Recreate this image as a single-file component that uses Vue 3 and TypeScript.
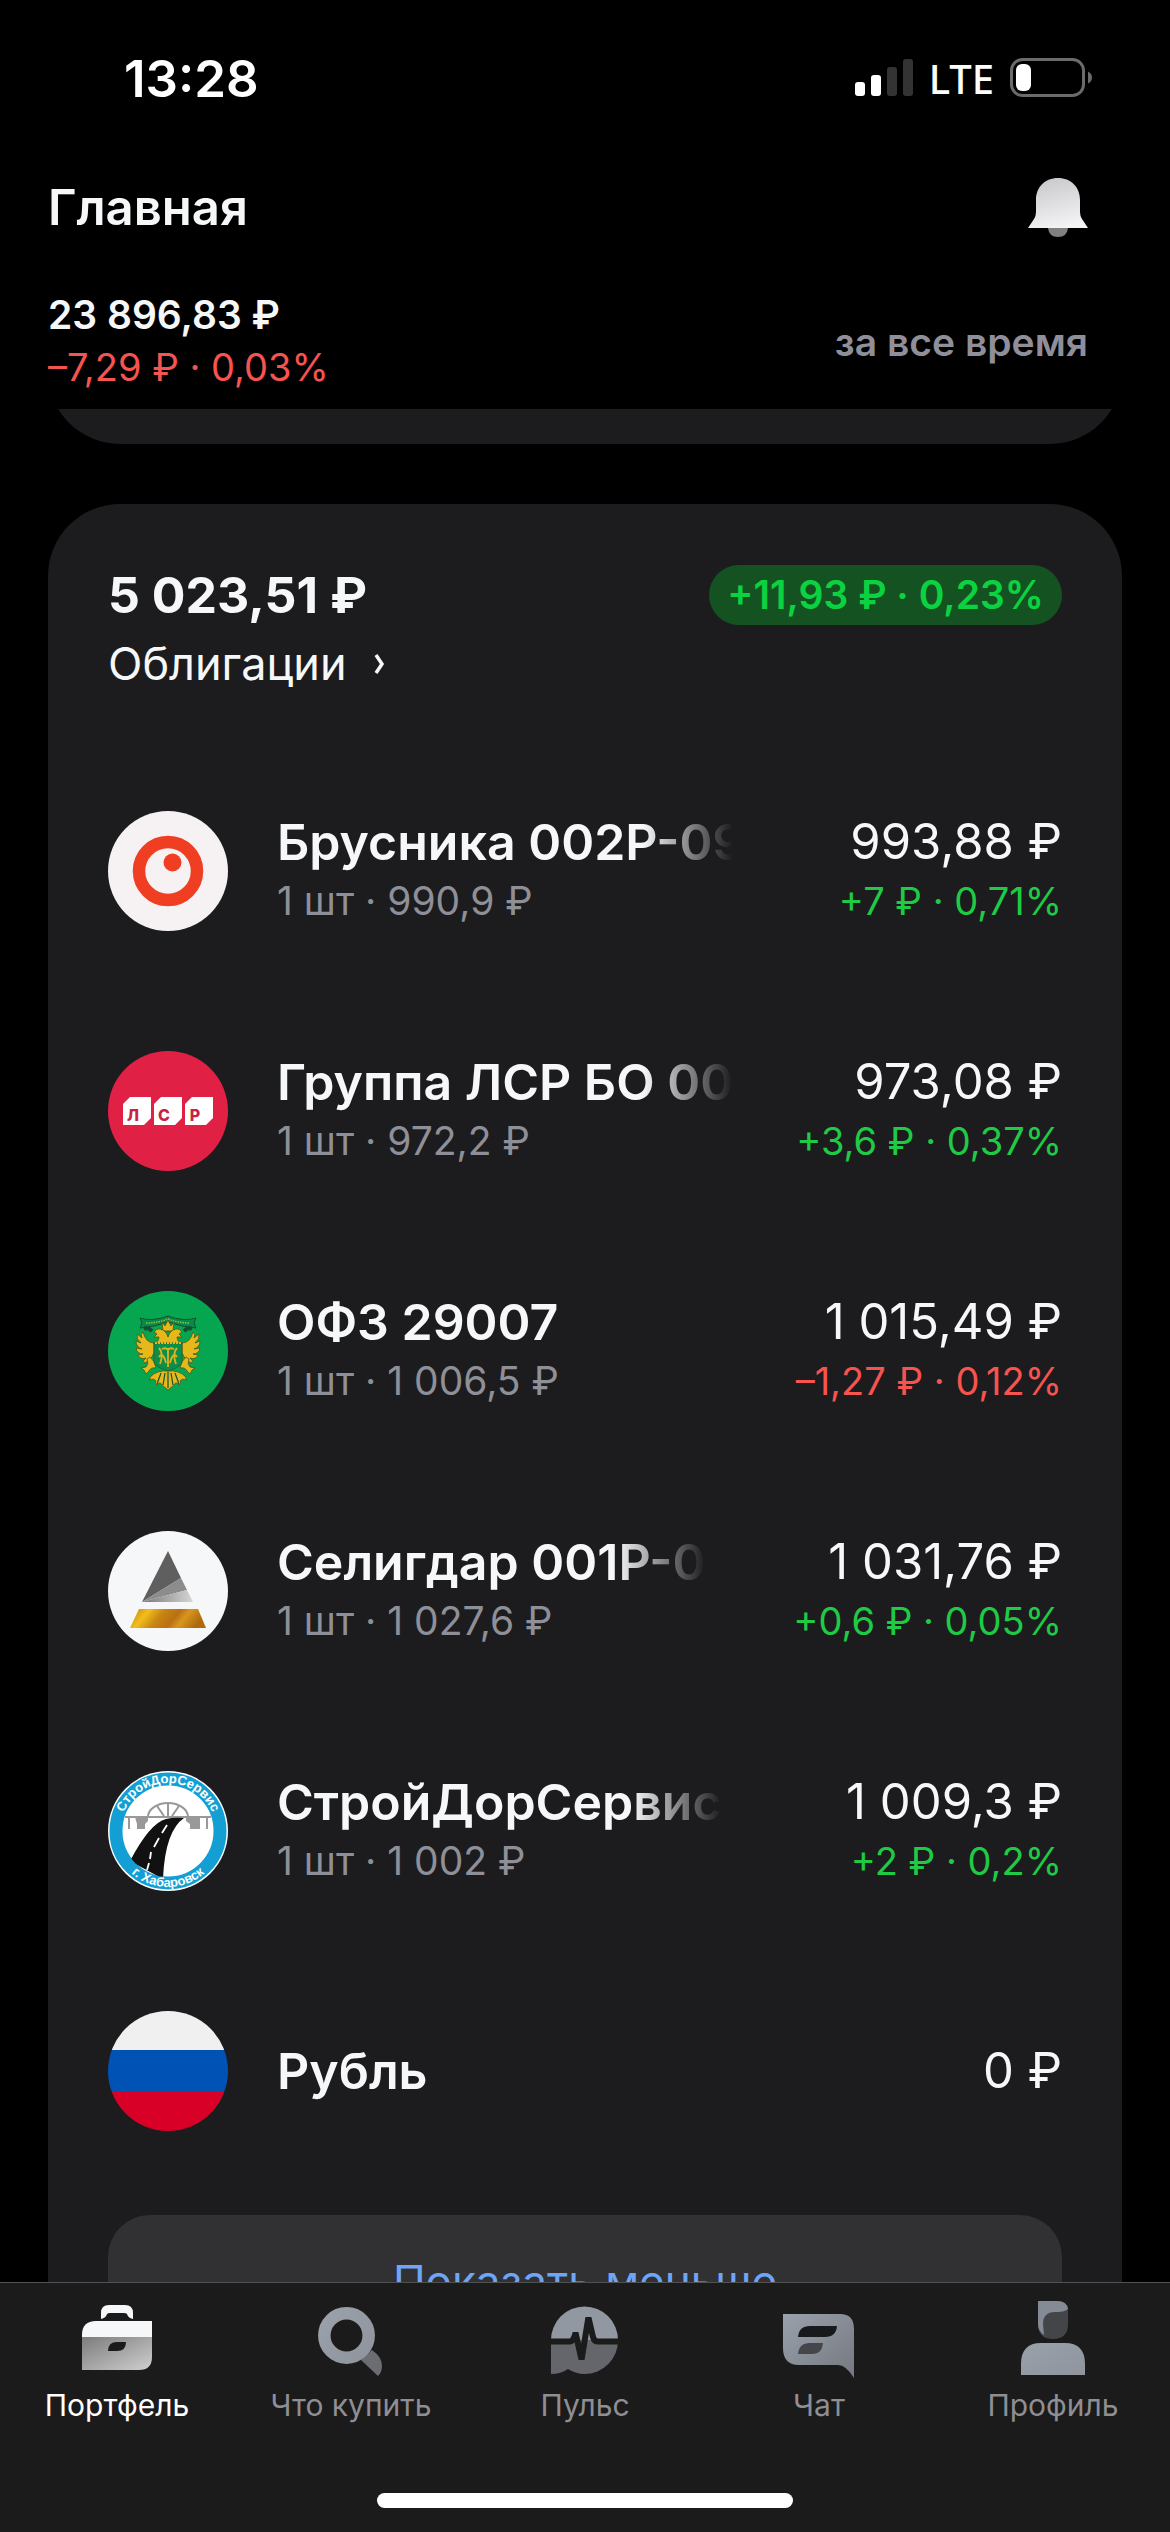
<script setup lang="ts">
type LogoName = 'brusnika' | 'lsr' | 'ofz' | 'seligdar' | 'sds' | 'rub'
type TabName = 'portfolio' | 'search' | 'pulse' | 'chat' | 'profile'

interface Holding {
  logo: LogoName
  name: string
  faded?: boolean
  details?: string
  value: string
  change?: string
  loss?: boolean
}

const holdings: Holding[] = [
  { logo: 'brusnika', name: 'Брусника 002Р-09', faded: true, details: '1 шт · 990,9 ₽', value: '993,88 ₽', change: '+7 ₽ · 0,71%' },
  { logo: 'lsr', name: 'Группа ЛСР БО 001', faded: true, details: '1 шт · 972,2 ₽', value: '973,08 ₽', change: '+3,6 ₽ · 0,37%' },
  { logo: 'ofz', name: 'ОФЗ 29007', details: '1 шт · 1 006,5 ₽', value: '1 015,49 ₽', change: '–1,27 ₽ · 0,12%', loss: true },
  { logo: 'seligdar', name: 'Селигдар 001Р-0', faded: true, details: '1 шт · 1 027,6 ₽', value: '1 031,76 ₽', change: '+0,6 ₽ · 0,05%' },
  { logo: 'sds', name: 'СтройДорСервис', faded: true, details: '1 шт · 1 002 ₽', value: '1 009,3 ₽', change: '+2 ₽ · 0,2%' },
  { logo: 'rub', name: 'Рубль', value: '0 ₽' },
]

const tabs: { id: TabName; label: string }[] = [
  { id: 'portfolio', label: 'Портфель' },
  { id: 'search', label: 'Что купить' },
  { id: 'pulse', label: 'Пульс' },
  { id: 'chat', label: 'Чат' },
  { id: 'profile', label: 'Профиль' },
]
const activeTab: TabName = 'portfolio'
</script>

<template>
  <div class="screen">
    <div class="status">
      <span class="time">13:28</span>
      <div class="indicators">
        <svg class="signal" viewBox="0 0 58 38" aria-hidden="true">
          <rect x="0" y="23" width="10" height="14" rx="3" fill="#fff" />
          <rect x="16" y="16" width="10" height="21" rx="3" fill="#fff" />
          <rect x="32" y="8" width="10" height="29" rx="3" fill="#333" />
          <rect x="48" y="0" width="10" height="37" rx="3" fill="#333" />
        </svg>
        <span class="network">LTE</span>
        <svg class="battery" viewBox="0 0 82 40" aria-hidden="true">
          <rect x="1.5" y="1.5" width="72" height="36" rx="11" fill="none" stroke="#6b6b6b" stroke-width="3" />
          <rect x="6" y="6" width="15" height="27" rx="6" fill="#fff" />
          <path d="M78 13.500Q82 15.500 82 19.500Q82 23.500 78 25.500Z" fill="#6b6b6b" />
        </svg>
      </div>
    </div>

    <header class="top">
      <div class="title-row">
        <h1>Главная</h1>
        <button class="bell" type="button" aria-label="Уведомления">
          <svg viewBox="0 0 60 60" aria-hidden="true">
            <defs>
              <linearGradient id="bellFill" x1="0.3" y1="0" x2="0.6" y2="1">
                <stop offset="0" stop-color="#c9c9cb" />
                <stop offset="1" stop-color="#f4f4f6" />
              </linearGradient>
            </defs>
            <path d="M20 50H40V50Q39 59 30 59Q21 59 20 50Z" fill="#808080" />
            <path d="M8 22C8 9 17 0 30 0S52 9 52 22V34Q52 38 54 41L60 50H0L6 41Q8 38 8 34Z" fill="url(#bellFill)" />
          </svg>
        </button>
      </div>
      <div class="summary">
        <div>
          <p class="total">23 896,83 ₽</p>
          <p class="total-change">–7,29 ₽ · 0,03%</p>
        </div>
        <button class="period" type="button">за все время</button>
      </div>
    </header>

    <main class="content">
      <section class="card card-above"></section>
      <section class="card">
        <div class="card-head">
          <h2>5 023,51 ₽</h2>
          <span class="badge">+11,93 ₽ · 0,23%</span>
        </div>
        <a class="category" href="#bonds">
          <span>Облигации</span>
          <svg viewBox="0 0 14 20" aria-hidden="true">
            <path d="M3 1L9 10L3 19" fill="none" stroke="#f6f7f8" stroke-width="3.500" />
          </svg>
        </a>

        <ul class="holdings">
          <li v-for="item in holdings" :key="item.logo" class="holding">
            <svg class="logo" viewBox="0 0 120 120" aria-hidden="true">
              <template v-if="item.logo === 'brusnika'">
                <circle cx="60" cy="60" r="60" fill="#f6f1f3" />
                <circle cx="60" cy="60" r="29" fill="none" stroke="#f03e23" stroke-width="12.500" />
                <circle cx="64.500" cy="51.500" r="9" fill="#f03e23" />
              </template>
              <template v-else-if="item.logo === 'lsr'">
                <circle cx="60" cy="60" r="60" fill="#e02045" />
                <g fill="#fff">
                  <path d="M22 46H43V67L36 74H15V53Z" />
                  <path d="M53 46H74V67L67 74H46V53Z" />
                  <path d="M84 46H105V67L98 74H77V53Z" />
                </g>
                <g class="lsr-letters">
                  <text x="25" y="70">Л</text>
                  <text x="56" y="70">С</text>
                  <text x="87" y="70">Р</text>
                </g>
              </template>
              <template v-else-if="item.logo === 'ofz'">
                <circle cx="60" cy="60" r="60" fill="#06a651" />
                <path d="M32 27Q44 31 60 25Q76 31 88 27L86 32L88 37Q74 36 60 31Q46 36 32 37L34 32Z" fill="#0a8a4a" stroke="#14502f" stroke-width="1" />
                <path d="M38 32Q50 32 60 28Q70 32 82 32" fill="none" stroke="#8fbf3f" stroke-width="1.500" stroke-dasharray="1.500 1" />
                <path d="M36 38Q40 36 44 40M84 38Q80 36 76 40" stroke="#14502f" stroke-width="4" fill="none" />
                <g fill="#e5b81c" stroke="#4c5518" stroke-width="0.800">
                  <path d="M54 31L57 35L60 29L63 35L66 31L65 40H55Z" />
                  <path d="M60 46Q58 39 52 38Q49 37 46 41L49 43L46 46L51 46Q51 51 46 52H74Q69 51 69 46L74 46L71 43L74 41Q71 37 68 38Q62 39 60 46Z" />
                  <path d="M46 52Q38 52 35 41Q32 43 34 47L29 43Q28 48 33 52L28 50Q28 56 34 58L28 57Q29 63 35 63L30 64Q32 69 38 67Q34 70 36 72Q42 71 46 62Z" />
                  <path d="M74 52Q82 52 85 41Q88 43 86 47L91 43Q92 48 87 52L92 50Q92 56 86 58L92 57Q91 63 85 63L90 64Q88 69 82 67Q86 70 84 72Q78 71 74 62Z" />
                  <path d="M42 66Q47 70 48 77Q43 76 41 80L38 83L36 79L33 77L38 76Q41 73 39 68Z" />
                  <path d="M78 66Q73 70 72 77Q77 76 79 80L82 83L84 79L87 77L82 76Q79 73 81 68Z" />
                  <path d="M60 80Q50 79 43 85L41 89Q46 87 48 90Q46 92 49 94Q52 90 54 94L60 99L66 94Q68 90 71 94Q74 92 72 90Q74 87 79 89L77 85Q70 79 60 80Z" />
                </g>
                <path d="M53 82L49 93M57 82L55 94M60 81V97M63 82L65 94M67 82L71 93" stroke="#14502f" stroke-width="1.200" />
                <path d="M46 52H74V71Q73 76 60 80Q47 76 46 71Z" fill="#0b8f4a" stroke="#275b28" stroke-width="0.800" />
                <path d="M47 52H73" stroke="#e5b81c" stroke-width="2" stroke-dasharray="2 1" />
                <path d="M51 57Q56 62 52 73M69 57Q64 62 68 73M60 57V76M54 58Q58 56 60 59Q62 56 66 58M51 66Q55 60 58 72M69 66Q65 60 62 72" fill="none" stroke="#dcb31f" stroke-width="1.800" />
              </template>
              <template v-else-if="item.logo === 'seligdar'">
                <defs>
                  <linearGradient id="goldBar" x1="0" x2="1" y1="0" y2="0.2">
                    <stop offset="0" stop-color="#b8830f" />
                    <stop offset="0.250" stop-color="#f2be1c" />
                    <stop offset="0.450" stop-color="#c98513" />
                    <stop offset="0.650" stop-color="#b97013" />
                    <stop offset="0.780" stop-color="#d9961e" />
                    <stop offset="1" stop-color="#b0690d" />
                  </linearGradient>
                  <linearGradient id="silverFace" x1="0" x2="1">
                    <stop offset="0" stop-color="#777" />
                    <stop offset="1" stop-color="#d6d6d6" />
                  </linearGradient>
                </defs>
                <circle cx="60" cy="60" r="60" fill="#f6f7f9" />
                <path d="M60 20L73 47L34 71Z" fill="#5f5f5f" />
                <path d="M73 47L79 59L34 71Z" fill="#8c8c8c" />
                <path d="M79 59L85 71H34Z" fill="url(#silverFace)" />
                <path d="M31 78H90L98 97H22Z" fill="url(#goldBar)" />
              </template>
              <template v-else-if="item.logo === 'sds'">
                <defs>
                  <path id="ringTop" d="M12 60A48 48 0 0 1 108 60" />
                  <path id="ringBottom" d="M4 60A56 56 0 0 0 116 60" />
                  <clipPath id="innerDisc"><circle cx="60" cy="60" r="46" /></clipPath>
                </defs>
                <circle cx="60" cy="60" r="60" fill="#fff" />
                <circle cx="60" cy="60" r="52" fill="none" stroke="#139fd3" stroke-width="13" />
                <g fill="none" stroke="#999" stroke-width="2">
                  <path d="M17 46H103" />
                  <path d="M40 46A20 14 0 0 1 80 46" />
                  <path d="M60 32V46M49 35L56 45M71 35L64 45M21 46V58M99 46V58" />
                </g>
                <path d="M27 46H40V50L37 53V58H29V53ZM78 46H92V58H82V53L78 50Z" fill="#999" />
                <path d="M76 47Q57 60 55 108L22 90Q42 52 58 48Q66 46 76 47Z" fill="#111" clip-path="url(#innerDisc)" />
                <path d="M59 54L54 62M51 67L46 76M43 81L42 88M41 92L39 99" stroke="#fff" stroke-width="1.800" />
                <g class="ring-letters">
                  <text text-anchor="middle"><textPath href="#ringTop" startOffset="50%">СтройДорСервис</textPath></text>
                  <text text-anchor="middle"><textPath href="#ringBottom" startOffset="50%">г. Хабаровск</textPath></text>
                </g>
              </template>
              <template v-else>
                <defs>
                  <clipPath id="flagDisc"><circle cx="60" cy="60" r="60" /></clipPath>
                </defs>
                <g clip-path="url(#flagDisc)">
                  <rect width="120" height="39" fill="#f0f0f0" />
                  <rect y="39" width="120" height="42" fill="#0052b4" />
                  <rect y="81" width="120" height="39" fill="#d80027" />
                </g>
              </template>
            </svg>
            <div class="info">
              <p class="name" :class="{ faded: item.faded }">{{ item.name }}</p>
              <p v-if="item.details" class="details">{{ item.details }}</p>
            </div>
            <div class="amounts">
              <p class="value">{{ item.value }}</p>
              <p v-if="item.change" class="change" :class="{ loss: item.loss }">{{ item.change }}</p>
            </div>
          </li>
        </ul>

        <button class="less" type="button">Показать меньше</button>
      </section>
    </main>

    <div class="bottom">
      <nav class="tabs">
        <a v-for="tab in tabs" :key="tab.id" class="tab" :class="{ active: tab.id === activeTab }" :href="'#' + tab.id">
          <svg viewBox="0 0 80 80" aria-hidden="true">
            <defs>
              <linearGradient :id="tab.id + 'Fill'" x1="0" y1="0" x2="1" y2="1">
                <stop offset="0" :stop-color="tab.id === 'portfolio' ? '#7c7c7d' : '#9aa1ab'" />
                <stop offset="1" :stop-color="tab.id === 'portfolio' ? '#cfcfd0' : tab.id === 'chat' ? '#74787f' : '#8f949d'" />
              </linearGradient>
            </defs>
            <template v-if="tab.id === 'portfolio'">
              <path d="M24 20V14Q24 6 32 6H48Q56 6 56 14V20Q51 19 50 15Q49 14 47 14H33Q31 14 30 15Q29 19 24 20Z" fill="#f6f7f8" />
              <path d="M5 38V36Q5 22 19 22H75V38Z" fill="#f6f7f8" />
              <path d="M5 38H75V58Q75 71 62 71H5Z" fill="url(#portfolioFill)" />
              <path d="M31 52Q31 43 40 43H49Q49 52 40 52Z" fill="#1b1b1b" />
            </template>
            <template v-else-if="tab.id === 'search'">
              <path d="M61 51Q71 58 71 67Q71 73 67 77L50 61Z" fill="#6b6d72" />
              <circle cx="35.500" cy="36.500" r="22.200" fill="none" stroke="url(#searchFill)" stroke-width="12.500" />
            </template>
            <template v-else-if="tab.id === 'pulse'">
              <path d="M6 41A33.500 33.500 0 0 1 73 41Z" fill="#9198a2" />
              <path d="M6 41H73A33.500 33.500 0 0 1 39.500 75Q31 75 23 70Q16 75 6 75Z" fill="#64666b" />
              <path d="M6 42.500H25Q28 42.500 30 36H31L36 58H37L43 21H44L48 38Q49 42.500 53 42.500H74" fill="none" stroke="#1b1b1b" stroke-width="6" />
            </template>
            <template v-else-if="tab.id === 'chat'">
              <path d="M4 15H61Q75 15 75 30V79Q67 66 59 66H20Q4 66 4 49Z" fill="url(#chatFill)" />
              <path d="M19 38Q20 27 31 27H58Q57 38 46 38Z" fill="#17191c" />
              <path d="M19 55Q20 44 31 44H44Q43 55 34 55Z" fill="#44464a" />
            </template>
            <template v-else>
              <path d="M25 2H44Q55 2 55 13V25Q55 40 40 40T25 25Z" fill="#434548" />
              <path d="M25 2H44Q54 2 55 10Q52 13 44 13Q30 12 30 25L31 36Q25 32 25 25Z" fill="#858b94" />
              <path d="M8 76V65Q8 44 28 44H52Q72 44 72 65V76Z" fill="url(#profileFill)" />
            </template>
          </svg>
          <span>{{ tab.label }}</span>
        </a>
      </nav>
      <div class="home-indicator"></div>
    </div>
  </div>
</template>

<style>
body {
  background: #000;
}
</style>

<style scoped>
.screen {
  display: flex;
  flex-direction: column;
  height: 100vh;
  overflow: hidden;
  background: #000;
  color: #f6f7f8;
  font-family: Inter, "Noto Sans", sans-serif;
}

h1,
h2,
p,
ul {
  margin: 0;
  padding: 0;
}

button {
  padding: 0;
  border: 0;
  background: none;
  font-family: inherit;
}

svg {
  display: block;
}

.status {
  display: flex;
  justify-content: space-between;
  align-items: center;
  height: 156px;
  padding: 0 78px 0 124px;
  color: #fff;
}

.time {
  font-size: 51px;
  font-weight: 600;
}

.indicators {
  display: flex;
  align-items: center;
  gap: 16px;
}

.signal {
  width: 58px;
  height: 38px;
}

.network {
  font-family: "Noto Sans", sans-serif;
  font-size: 40px;
  font-weight: 500;
}

.battery {
  width: 82px;
  height: 40px;
}

.top {
  padding: 0 82px 15px 48px;
}

.title-row {
  display: flex;
  justify-content: space-between;
  align-items: center;
  height: 104px;
}

h1,
h2 {
  line-height: 60px;
}

h1 {
  font-size: 49px;
  font-weight: 600;
}

h2 {
  font-size: 50px;
}

.bell svg {
  width: 60px;
  height: 60px;
}

.summary {
  display: flex;
  justify-content: space-between;
  align-items: center;
  padding-top: 28px;
  line-height: 53px;
}

.total {
  font-size: 39px;
  font-weight: 600;
}

.total-change {
  color: #f7534f;
  font-size: 38px;
}

.period {
  color: #8f8f9a;
  font-size: 39px;
  font-weight: 600;
}

.content {
  flex: 1;
  min-height: 0;
  overflow: hidden;
  padding: 0 48px;
}

.card {
  padding: 61px 60px;
  border-radius: 72px;
  background: #1c1c1e;
}

.card-above {
  height: 80px;
  margin: -167px 0 60px;
}

.card-head {
  display: flex;
  justify-content: space-between;
  align-items: center;
}

.badge {
  padding: 0 18px;
  border-radius: 30px;
  background: #145321;
  color: #0bd240;
  font-size: 39px;
  font-weight: 600;
  line-height: 60px;
}

.category {
  display: flex;
  align-items: center;
  gap: 26px;
  margin: 11px 0 59px;
  color: inherit;
  font-size: 45px;
  line-height: 56px;
  text-decoration: none;
}

.category svg {
  width: 14px;
  height: 20px;
}

.holdings {
  list-style: none;
}

.holding {
  display: flex;
  align-items: center;
  height: 240px;
}

.logo {
  flex: none;
  width: 120px;
  height: 120px;
}

.info {
  flex: 1;
  min-width: 0;
  margin-left: 49px;
}

.name {
  width: fit-content;
  max-width: 456px;
  overflow: hidden;
  font-size: 50px;
  font-weight: 600;
  line-height: 60px;
  white-space: nowrap;
}

.faded {
  mask-image: linear-gradient(to left, transparent, #000 90px);
}

.details {
  color: #8f8f98;
  font-size: 39px;
  line-height: 58px;
}

.amounts {
  text-align: right;
  white-space: nowrap;
}

.value {
  font-size: 49px;
  line-height: 60px;
}

.change {
  color: #1fcb45;
  font-size: 38px;
  line-height: 58px;
}

.loss {
  color: #f7534f;
}

.lsr-letters {
  fill: #c92243;
  font-size: 16px;
  font-weight: 800;
  text-anchor: middle;
}

.ring-letters {
  fill: #fff;
  font-family: "Liberation Sans", sans-serif;
  font-size: 13px;
  font-weight: 700;
}

.less {
  width: 100%;
  height: 132px;
  margin-top: 24px;
  border-radius: 42px;
  background: #313133;
  color: #6ea5f7;
  font-size: 44px;
}

.bottom {
  padding-bottom: 24px;
  border-top: 1px solid #515152;
  background: #1b1b1b;
}

.tabs {
  display: grid;
  grid-template-columns: repeat(5, 1fr);
  padding-top: 16px;
}

.tab {
  display: flex;
  flex-direction: column;
  align-items: center;
  gap: 8px;
  color: #8e8e93;
  font-size: 30px;
  line-height: 36px;
  text-decoration: none;
}

.tab svg {
  width: 80px;
  height: 80px;
}

.active {
  color: #fff;
}

.home-indicator {
  width: 416px;
  height: 15px;
  margin: 70px auto 0;
  border-radius: 8px;
  background: #fff;
}
</style>
